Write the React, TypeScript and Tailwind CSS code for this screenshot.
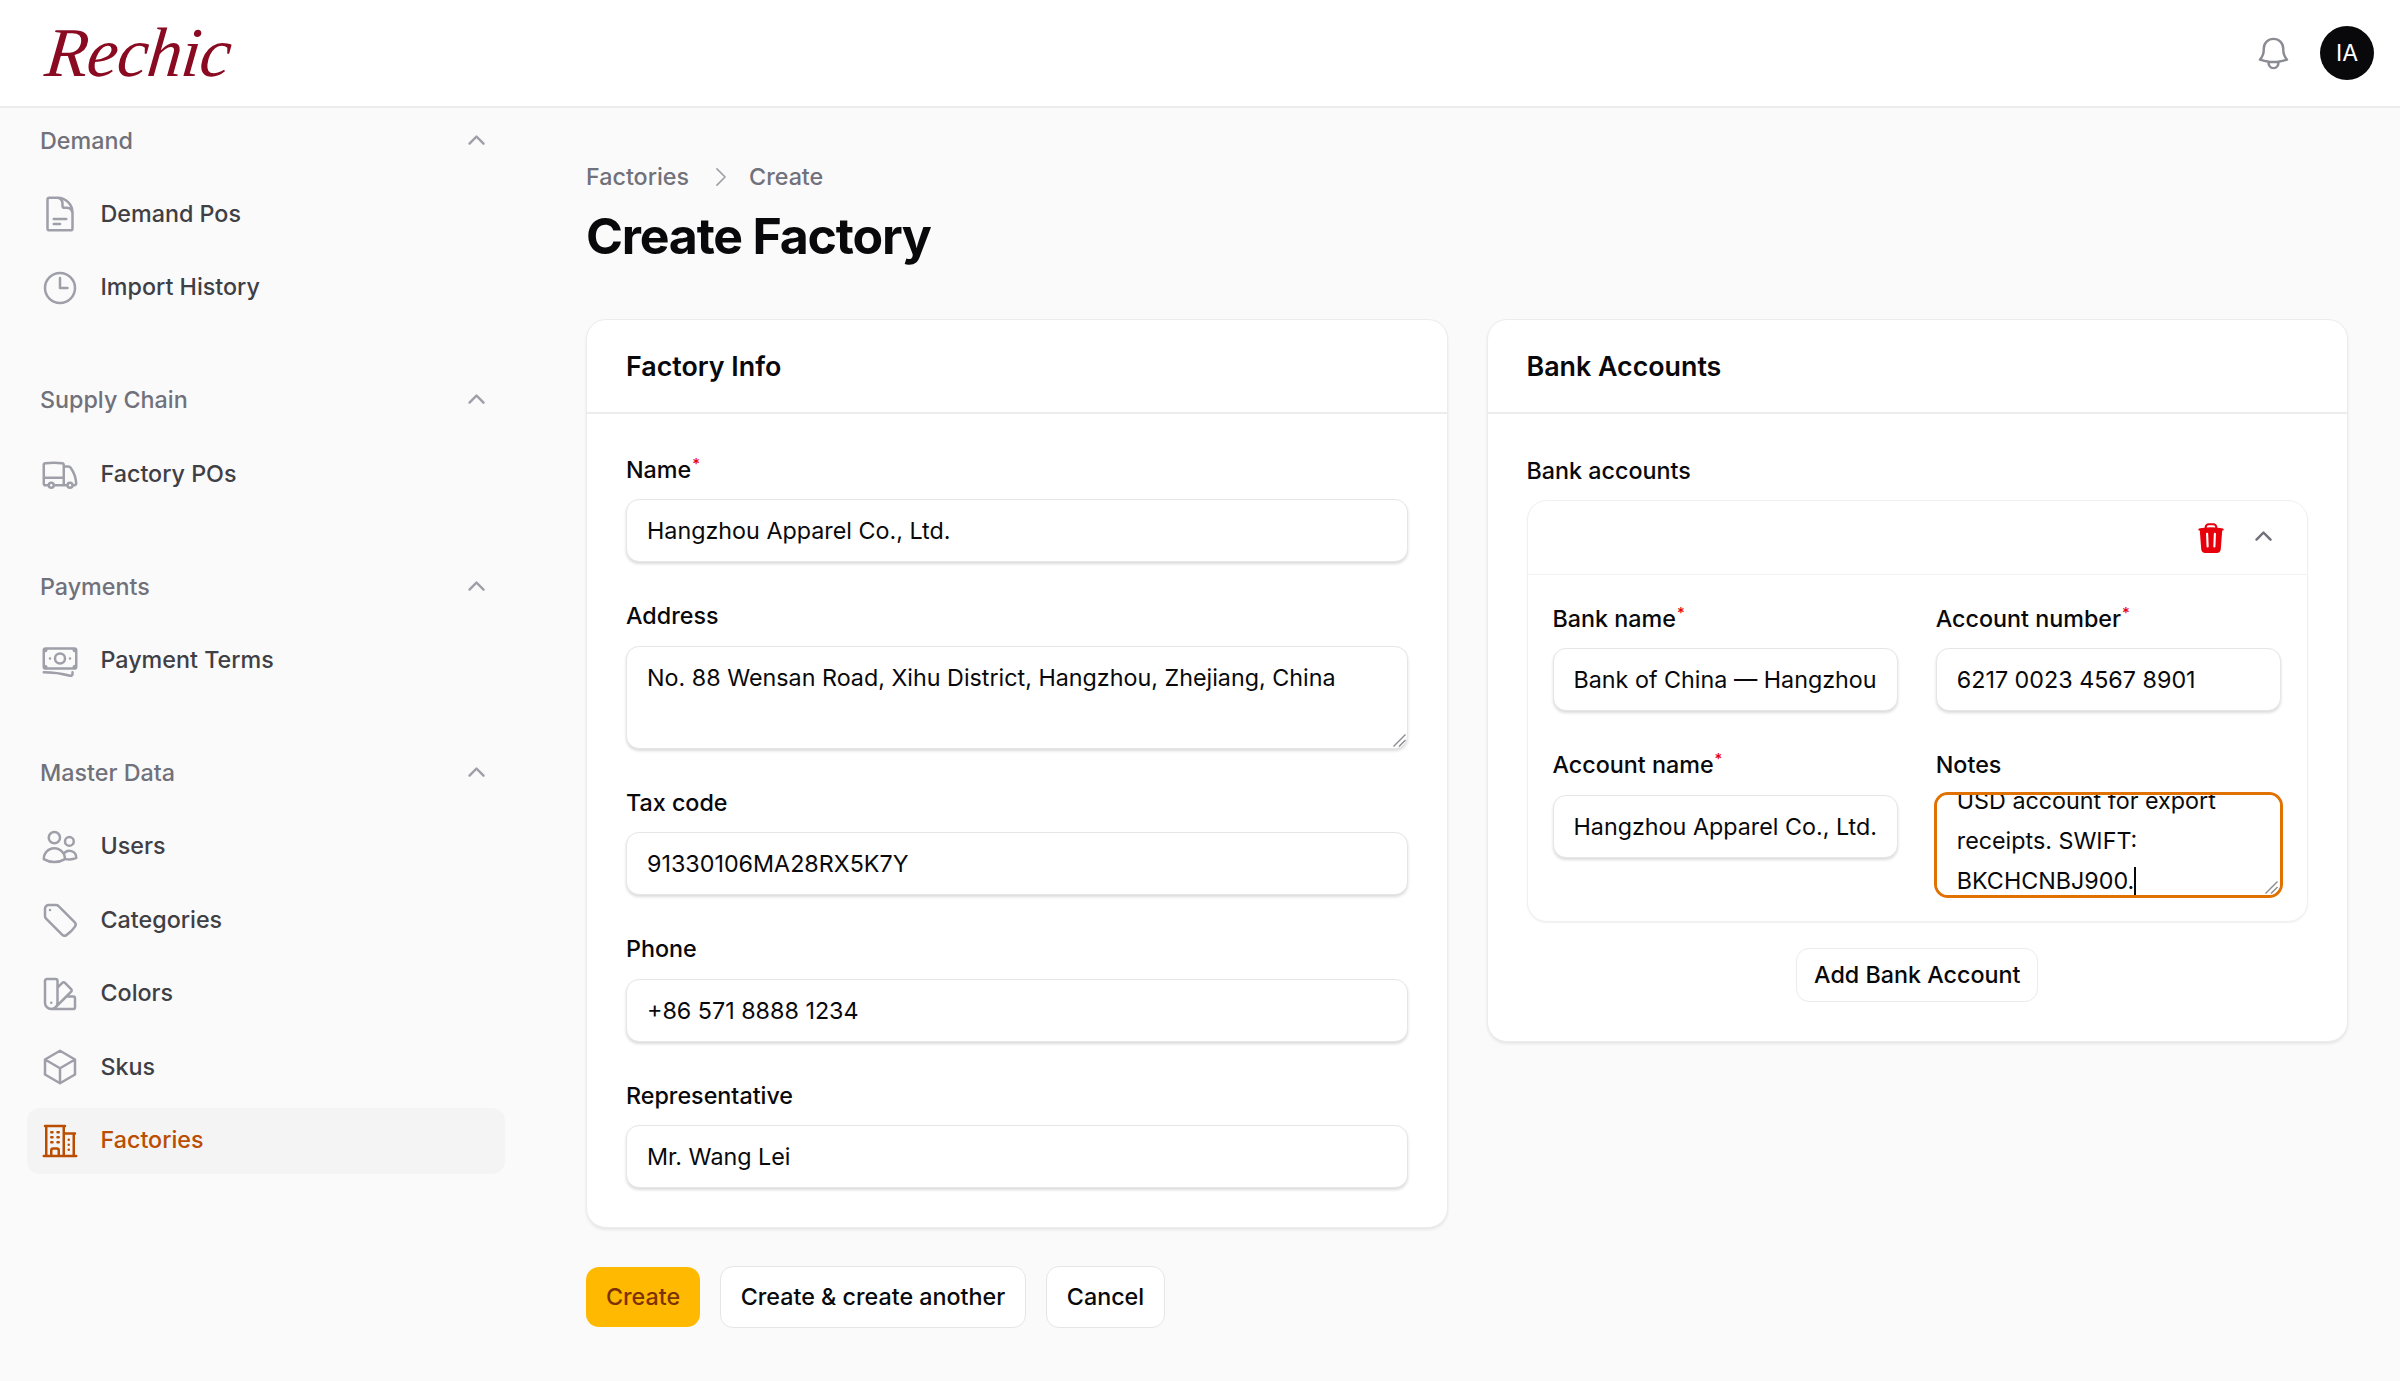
import { useEffect, useRef, type ComponentType } from "react";
import {
  HiMiniChevronUp,
  HiOutlineBanknotes,
  HiOutlineBell,
  HiOutlineBuildingOffice2,
  HiOutlineChevronRight,
  HiOutlineClock,
  HiOutlineCube,
  HiOutlineDocumentText,
  HiOutlineSwatch,
  HiOutlineTag,
  HiOutlineTruck,
  HiOutlineUsers,
  HiTrash,
} from "react-icons/hi2";

type NavItem = {
  label: string;
  icon: ComponentType<{ className?: string }>;
  active?: boolean;
};

const groups: { label: string; items: NavItem[] }[] = [
  {
    label: "Demand",
    items: [
      { label: "Demand Pos", icon: HiOutlineDocumentText },
      { label: "Import History", icon: HiOutlineClock },
    ],
  },
  {
    label: "Supply Chain",
    items: [{ label: "Factory POs", icon: HiOutlineTruck }],
  },
  {
    label: "Payments",
    items: [{ label: "Payment Terms", icon: HiOutlineBanknotes }],
  },
  {
    label: "Master Data",
    items: [
      { label: "Users", icon: HiOutlineUsers },
      { label: "Categories", icon: HiOutlineTag },
      { label: "Colors", icon: HiOutlineSwatch },
      { label: "Skus", icon: HiOutlineCube },
      { label: "Factories", icon: HiOutlineBuildingOffice2, active: true },
    ],
  },
];

const inputClass =
  "h-[63px] w-full rounded-[13px] border-[1.5px] border-[#e6e6e8] bg-white px-[20px] text-[23.3px] text-[#09090b] shadow-[0_2px_3px_rgba(0,0,0,0.14)] outline-none";

function Label({ text, required }: { text: string; required?: boolean }) {
  return (
    <div className="flex h-[36px] items-center text-[23.3px] font-medium text-[#09090b]">
      {text}
      {required && (
        <span className="mb-[12px] ml-[1px] text-[15px] text-[#e7000b]">*</span>
      )}
    </div>
  );
}

function Field({
  label,
  value,
  required,
}: {
  label: string;
  value: string;
  required?: boolean;
}) {
  return (
    <div className="flex flex-col gap-[11px]">
      <Label text={label} required={required} />
      <input readOnly value={value} className={inputClass} />
    </div>
  );
}

// Drag grip in the textarea corner
function ResizeGrip({ className }: { className: string }) {
  return (
    <svg
      viewBox="0 0 13 13"
      className={`pointer-events-none absolute h-[13px] w-[13px] ${className}`}
      fill="none"
      stroke="#8a8a8f"
      strokeWidth="1.4"
    >
      <path d="M0.5 12.5 12.5 0.5M6 12.5l6.5-6.5" />
    </svg>
  );
}

function Sidebar() {
  return (
    <aside className="flex w-[532px] shrink-0 flex-col gap-[47px] px-[27px]">
      {groups.map((group) => (
        <div key={group.label} className="flex flex-col gap-[7.4px]">
          <div className="flex h-[66px] items-center justify-between pl-[13px] pr-[12px] text-[23.3px] font-medium text-[#71717b]">
            {group.label}
            <HiMiniChevronUp className="h-[33px] w-[33px] text-[#9f9fa9]" />
          </div>
          {group.items.map((item) => (
            <div
              key={item.label}
              className={
                item.active
                  ? "flex h-[66px] items-center gap-[20.5px] rounded-[13px] bg-[#f4f4f5] px-[13px] text-[23.3px] font-medium text-[#bb4d00]"
                  : "flex h-[66px] items-center gap-[20.5px] rounded-[13px] px-[13px] text-[23.3px] font-medium text-[#3f3f46]"
              }
            >
              <item.icon
                className={
                  item.active
                    ? "h-[40px] w-[40px] text-[#bb4d00]"
                    : "h-[40px] w-[40px] text-[#9f9fa9]"
                }
              />
              {item.label}
            </div>
          ))}
        </div>
      ))}
    </aside>
  );
}

function NotesField() {
  const ref = useRef<HTMLTextAreaElement>(null);

  // The first line is partly scrolled away, as after typing to the end
  useEffect(() => {
    if (ref.current) ref.current.scrollTop = 24;
  }, []);

  return (
    <div className="flex flex-col gap-[11px]">
      <Label text="Notes" />
      <div className="relative -mx-[2px] -mt-[2.5px] h-[106px]">
        <textarea
          ref={ref}
          readOnly
          value="USD account for export receipts. SWIFT: BKCHCNBJ900."
          className="block h-full w-full resize-none rounded-[14px] border-[3px] border-[#e17100] bg-white px-[20px] py-[10px] text-[23.3px] leading-[40px] text-[#09090b] outline-none"
        />
        <span className="absolute left-[200px] top-[75px] h-[28px] w-[2px] bg-[#09090b]" />
        <ResizeGrip className="bottom-[4px] right-[5px]" />
      </div>
    </div>
  );
}

export default function App() {
  return (
    <div className="min-h-[1381px] bg-[#fafafa] font-['Inter',sans-serif]">
      <header className="flex h-[108px] items-center justify-between border-b-2 border-[#ececee] bg-white pl-[46px] pr-[26px]">
        <span className="-skew-x-6 font-['Liberation_Serif',serif] text-[70px] italic leading-none tracking-[-1px] text-[#8a0a22]">
          Rechic
        </span>
        <div className="flex items-center gap-[27px]">
          <HiOutlineBell className="h-[39px] w-[39px] text-[#8b8b94]" />
          <div className="flex h-[54px] w-[54px] items-center justify-center rounded-full bg-[#09090b] text-[23px] text-white">
            IA
          </div>
        </div>
      </header>

      <div className="flex">
        <Sidebar />

        <main className="flex min-w-0 flex-1 flex-col pl-[54px] pr-[52px] pt-[51px]">
          <nav className="flex h-[36px] items-center text-[23.3px] font-medium text-[#71717b]">
            <span>Factories</span>
            <HiOutlineChevronRight className="ml-[19px] mr-[15px] h-[26px] w-[26px] text-[#9f9fa9]" />
            <span>Create</span>
          </nav>
          <h1 className="mt-[11px] text-[50px] font-bold leading-[60px] tracking-[-1.2px] text-[#09090b]">
            Create Factory
          </h1>

          <div className="mt-[52.5px] grid grid-cols-2 items-start gap-[39px]">
            <section className="rounded-[20px] border-[1.5px] border-[#ececee] bg-white shadow-[0_2px_3px_rgba(0,0,0,0.08)]">
              <h2 className="flex h-[94.5px] items-center border-b-2 border-[#ececee] px-[39px] text-[26.8px] font-semibold text-[#09090b]">
                Factory Info
              </h2>
              <div className="flex flex-col gap-[36.5px] px-[39px] pb-[39px] pt-[38px]">
                <Field label="Name" value="Hangzhou Apparel Co., Ltd." required />
                <div className="flex flex-col gap-[11px]">
                  <Label text="Address" />
                  <div className="relative h-[103px]">
                    <textarea
                      readOnly
                      value="No. 88 Wensan Road, Xihu District, Hangzhou, Zhejiang, China"
                      className="block h-full w-full resize-none rounded-[13px] border-[1.5px] border-[#e6e6e8] bg-white px-[20px] pb-[10px] pt-[14px] text-[23.3px] leading-[33px] text-[#09090b] shadow-[0_2px_3px_rgba(0,0,0,0.14)] outline-none"
                    />
                    <ResizeGrip className="bottom-[2px] right-[2px]" />
                  </div>
                </div>
                <Field label="Tax code" value="91330106MA28RX5K7Y" />
                <Field label="Phone" value="+86 571 8888 1234" />
                <Field label="Representative" value="Mr. Wang Lei" />
              </div>
            </section>

            <section className="rounded-[20px] border-[1.5px] border-[#ececee] bg-white shadow-[0_2px_3px_rgba(0,0,0,0.08)]">
              <h2 className="flex h-[94.5px] items-center border-b-2 border-[#ececee] px-[39px] text-[26.8px] font-semibold text-[#09090b]">
                Bank Accounts
              </h2>
              <div className="flex flex-col p-[39px]">
                <Label text="Bank accounts" />
                <div className="mt-[11px] rounded-[20px] border-[1.5px] border-[#f0f0f1] bg-white shadow-[0_1px_2px_rgba(0,0,0,0.06)]">
                  <div className="flex h-[74px] items-center justify-end gap-[19.5px] border-b-[1.5px] border-[#f2f2f3] pr-[27px]">
                    <HiTrash className="h-[34px] w-[34px] text-[#e7000b]" />
                    <HiMiniChevronUp className="h-[33px] w-[33px] text-[#71717b]" />
                  </div>
                  <div className="grid grid-cols-2 gap-x-[38px] gap-y-[36.5px] pb-[23px] pl-[25px] pr-[26px] pt-[26px]">
                    <Field label="Bank name" value="Bank of China — Hangzhou" required />
                    <Field label="Account number" value="6217 0023 4567 8901" required />
                    <Field label="Account name" value="Hangzhou Apparel Co., Ltd." required />
                    <NotesField />
                  </div>
                </div>
                <button className="mt-[26px] h-[54px] w-[242px] self-center rounded-[13px] border-[1.5px] border-[#ececee] bg-white text-[23.3px] font-medium text-[#09090b]">
                  Add Bank Account
                </button>
              </div>
            </section>
          </div>

          <div className="mt-[38px] flex items-center gap-[20px]">
            <button className="h-[60px] w-[114px] rounded-[13px] bg-[#ffb900] text-[23.3px] font-medium text-[#7b3306]">
              Create
            </button>
            <button className="h-[62px] w-[306px] rounded-[13px] border-[1.5px] border-[#e6e6e8] bg-white text-[23.3px] font-medium text-[#09090b]">
              Create &amp; create another
            </button>
            <button className="h-[62px] w-[119px] rounded-[13px] border-[1.5px] border-[#e6e6e8] bg-white text-[23.3px] font-medium text-[#09090b]">
              Cancel
            </button>
          </div>
        </main>
      </div>
    </div>
  );
}
